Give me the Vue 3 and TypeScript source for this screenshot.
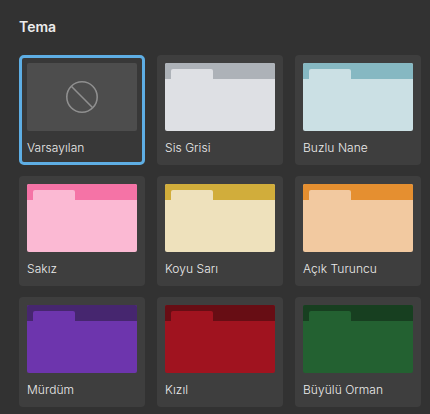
<script setup lang="ts">
interface Theme {
  name: string
  band?: string
  body?: string
}

const themes: Theme[] = [
  { name: 'Varsayılan' },
  { name: 'Sis Grisi', band: '#adb2b8', body: '#dee0e4' },
  { name: 'Buzlu Nane', band: '#86b8c2', body: '#cbe0e4' },
  { name: 'Sakız', band: '#f573a6', body: '#fbb9d3' },
  { name: 'Koyu Sarı', band: '#d1ad3b', body: '#eee1bc' },
  { name: 'Açık Turuncu', band: '#e58f30', body: '#f2c9a0' },
  { name: 'Mürdüm', band: '#46266f', body: '#6d35ad' },
  { name: 'Kızıl', band: '#670d14', body: '#a0131f' },
  { name: 'Büyülü Orman', band: '#173f20', body: '#236131' },
]
</script>

<template>
  <div class="panel">
    <h2 class="panel__title">Tema</h2>
    <div class="grid">
      <div
        v-for="(theme, i) in themes"
        :key="theme.name"
        class="card"
        :class="{ 'is-active': i === 0 }"
      >
        <div v-if="theme.band" class="folder" :style="{ background: theme.body }">
          <div class="folder__band" :style="{ background: theme.band }">
            <div class="folder__tab" :style="{ background: theme.body }" />
          </div>
        </div>
        <div v-else class="folder folder--none">
          <svg width="34" height="34" viewBox="0 0 34 34" fill="none" stroke="#8f8f8f" stroke-width="1.6">
            <circle cx="17" cy="17" r="15.2" />
            <path d="M6.3 6.3 27.7 27.7" />
          </svg>
        </div>
        <div class="card__label">{{ theme.name }}</div>
      </div>
    </div>
  </div>
</template>

<style>
html, body { margin: 0; background: #323232; }
</style>

<style scoped>
.panel { width: 430px; height: 414px; box-sizing: border-box; padding: 18px 9px 0 19px; overflow: hidden; background: #323232; font-family: Inter, "Liberation Sans", sans-serif; }
.panel__title { margin: 0 0 20px; font-size: 14px; line-height: 17px; font-weight: 600; color: #ececec; }
.grid { display: grid; grid-template-columns: repeat(3, 126px); gap: 11px 12px; }
.card { position: relative; height: 110px; box-sizing: border-box; padding: 8px; border-radius: 4px; background: #3e3e3e; }
.card.is-active { background: #383838; }
.card.is-active::after { content: ''; position: absolute; inset: 0; border: 3px solid #5eaee4; border-radius: 5px; }
.folder { height: 68px; border-radius: 2px; overflow: hidden; }
.folder__band { height: 16px; display: flex; align-items: flex-end; padding-left: 6px; }
.folder__tab { width: 42px; height: 10px; border-radius: 2px 2px 0 0; }
.folder--none { display: flex; align-items: center; justify-content: center; background: #4d4d4d; }
.card__label { margin-top: 9px; font-size: 12px; line-height: 15px; font-weight: 300; letter-spacing: 0.05px; color: #ececec; white-space: nowrap; }
</style>
